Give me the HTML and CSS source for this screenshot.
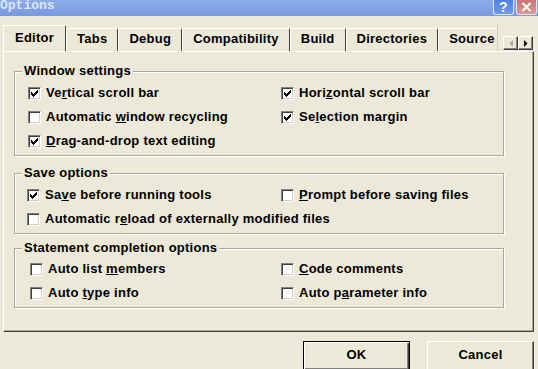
FILE: index.html
```html
<!DOCTYPE html>
<html lang="en">
<head>
  <meta charset="UTF-8" />
  <title>Options</title>
  <link rel="stylesheet" href="styles.css">
</head>
<body>
  <div class="titlebar">
    <span class="title">Options</span>
    <div class="caption-btns">
      <span class="cap-btn help">?</span>
      <span class="cap-btn close">
        <svg width="11" height="10" viewBox="0 0 11 10"><path d="M1.5 1l8 8M9.5 1l-8 8" stroke="#fff" stroke-width="2"/></svg>
      </span>
    </div>
  </div>

  <div class="tabrow">
    <div class="tabstrip">
      <div class="tab active">Editor</div>
      <div class="tab">Tabs</div>
      <div class="tab">Debug</div>
      <div class="tab">Compatibility</div>
      <div class="tab">Build</div>
      <div class="tab">Directories</div>
      <div class="tab">Source</div>
    </div>
    <div class="spin">
      <span class="spin-btn"><svg width="4" height="7" viewBox="0 0 4 7"><path d="M4 0v7L0.5 3.5z" fill="#aca899"/></svg></span>
      <span class="spin-btn"><svg width="4" height="7" viewBox="0 0 4 7"><path d="M0 0v7l3.5-3.5z" fill="#000"/></svg></span>
    </div>
  </div>

  <div class="panel">
    <div class="group">
      <div class="group-title">Window settings</div>
      <div class="opts">
        <div class="opt"><span class="cb"><svg width="11" height="11" viewBox="0 0 11 11"><path d="M2 4h1v3H2zM3 5h1v3H3zM4 6h1v3H4zM5 5h1v3H5zM6 4h1v3H6zM7 3h1v3H7zM8 2h1v3H8z"/></svg></span><span>Ve<u>r</u>tical scroll bar</span></div>
        <div class="opt"><span class="cb"><svg width="11" height="11" viewBox="0 0 11 11"><path d="M2 4h1v3H2zM3 5h1v3H3zM4 6h1v3H4zM5 5h1v3H5zM6 4h1v3H6zM7 3h1v3H7zM8 2h1v3H8z"/></svg></span><span>Hori<u>z</u>ontal scroll bar</span></div>
        <div class="opt"><span class="cb"></span><span>Automatic <u>w</u>indow recycling</span></div>
        <div class="opt"><span class="cb"><svg width="11" height="11" viewBox="0 0 11 11"><path d="M2 4h1v3H2zM3 5h1v3H3zM4 6h1v3H4zM5 5h1v3H5zM6 4h1v3H6zM7 3h1v3H7zM8 2h1v3H8z"/></svg></span><span>Se<u>l</u>ection margin</span></div>
        <div class="opt"><span class="cb"><svg width="11" height="11" viewBox="0 0 11 11"><path d="M2 4h1v3H2zM3 5h1v3H3zM4 6h1v3H4zM5 5h1v3H5zM6 4h1v3H6zM7 3h1v3H7zM8 2h1v3H8z"/></svg></span><span><u>D</u>rag-and-drop text editing</span></div>
      </div>
    </div>

    <div class="group group-save">
      <div class="group-title">Save options</div>
      <div class="opts opts-narrow">
        <div class="opt"><span class="cb"><svg width="11" height="11" viewBox="0 0 11 11"><path d="M2 4h1v3H2zM3 5h1v3H3zM4 6h1v3H4zM5 5h1v3H5zM6 4h1v3H6zM7 3h1v3H7zM8 2h1v3H8z"/></svg></span><span>Sa<u>v</u>e before running tools</span></div>
        <div class="opt"><span class="cb"></span><span><u>P</u>rompt before saving files</span></div>
        <div class="opt wide"><span class="cb"></span><span>Automatic r<u>e</u>load of externally modified files</span></div>
      </div>
    </div>

    <div class="group group-stmt">
      <div class="group-title">Statement completion options</div>
      <div class="opts opts-wide">
        <div class="opt"><span class="cb"></span><span>Auto list <u>m</u>embers</span></div>
        <div class="opt"><span class="cb"></span><span><u>C</u>ode comments</span></div>
        <div class="opt"><span class="cb"></span><span>Auto <u>t</u>ype info</span></div>
        <div class="opt"><span class="cb"></span><span>Auto p<u>a</u>rameter info</span></div>
      </div>
    </div>
  </div>

  <div class="buttons">
    <button class="btn default">OK</button>
    <button class="btn">Cancel</button>
  </div>
</body>
</html>
```

FILE: styles.css
```css
html, body {
  margin: 0;
  padding: 0;
  width: 538px;
  height: 369px;
  overflow: hidden;
  background: #ece9d8;
  font-family: 'Liberation Sans', Arial, sans-serif;
  font-size: 13px;
  font-weight: bold;
  letter-spacing: 0.25px;
  color: #000;
}
* { box-sizing: border-box; }

/* title bar, top is cut off in the shot */
.titlebar {
  height: 16px;
  display: flex;
  justify-content: space-between;
  background: linear-gradient(to bottom, #8eabea, #7898e0);
}

.title {
  font-family: 'Liberation Mono', 'Courier New', monospace;
  font-size: 13px;
  line-height: 13px;
  letter-spacing: 0;
  margin-top: -1px;
  color: #dde6f8;
}

.caption-btns {
  display: flex;
  gap: 2px;
  margin-right: 1px;
}

.cap-btn {
  width: 21px;
  height: 15px;
  display: flex;
  align-items: center;
  justify-content: center;
  border: 1px solid #dfe6f7;
  border-top: none;
  border-radius: 0 0 3px 3px;
  color: #fff;
  font-size: 14px;
  line-height: 14px;
}

.help { background: linear-gradient(to bottom, #4f82e6, #6d9aec); }
.close { background: linear-gradient(to bottom, #c97470, #dc9a94); }

/* tabs */
.tabrow {
  display: flex;
  align-items: flex-end;
  height: 35px;
}

.tabstrip {
  display: flex;
  align-items: flex-end;
  width: 495px;
  margin-left: 3px;
  height: 27px;
  overflow: hidden;
  border-right: 1px solid #d0ccbc;
}

.tab {
  flex-shrink: 0;
  height: 23px;
  padding: 1px 10px 0;
  line-height: 17px;
  border-top: 1px solid #fff;
  border-left: 1px solid #fff;
  border-right: 1px solid #404040;
  border-radius: 2px 2px 0 0;
  white-space: nowrap;
}

.tab.active {
  position: relative;
  height: 27px;
  margin-bottom: -1px;
  padding: 3px 11px 0 11px;
  background: #ece9d8;
}

.spin {
  display: flex;
  margin: 0 0 1px 5px;
}

.spin-btn {
  width: 15px;
  height: 14px;
  display: flex;
  align-items: center;
  justify-content: center;
  border: 1px solid;
  border-color: #fff #404040 #404040 #fff;
  box-shadow: inset -1px -1px #808080;
}

/* page */
.panel {
  position: relative;
  margin-left: 3px;
  width: 531px;
  height: 281px;
  padding-top: 19px;
  border: 1px solid;
  border-color: #fff #404040 #404040 #fff;
  box-shadow: inset -1px -1px #aca899;
}

.group {
  margin-left: 10px;
  width: 490px;
  padding-bottom: 2px;
  border: 1px solid #aca899;
  box-shadow: inset 1px 1px #fff, 1px 1px #fff;
}

.group-save { margin-top: 17px; }
.group-stmt { margin-top: 14px; }

.group-title {
  width: fit-content;
  margin: -8px 0 3px 7px;
  padding: 0 2px;
  line-height: 14px;
  background: #ece9d8;
}

.group-stmt .group-title { margin-bottom: 2px; }

.opts {
  display: grid;
  grid-template-columns: 253px 1fr;
  grid-auto-rows: 24px;
  padding-left: 13px;
}

.opts-narrow {
  grid-template-columns: 254px 1fr;
  padding-left: 12px;
}

.opts-wide {
  grid-template-columns: 251px 1fr;
  padding-left: 15px;
}

.opt {
  display: flex;
  align-items: center;
  line-height: 16px;
  white-space: nowrap;
}

.opt.wide { grid-column: span 2; }

.cb {
  flex-shrink: 0;
  width: 13px;
  height: 13px;
  margin-right: 5px;
  background: #fff;
  border: 1px solid;
  border-color: #808080 #fff #fff #808080;
  box-shadow: inset 1px 1px #404040, inset -1px -1px #d4d0c8;
}

.cb svg { display: block; }

/* dialog buttons */
.buttons {
  display: flex;
  justify-content: flex-end;
  gap: 17px;
  margin: 9px 4px 0 0;
}

.btn {
  width: 107px;
  height: 30px;
  padding: 5px 0 0;
  font: inherit;
  letter-spacing: inherit;
  line-height: 16px;
  background: #ece9d8;
  color: #000;
  border: 1px solid;
  border-color: #fff #404040 #404040 #fff;
  box-shadow: inset -1px -1px #808080;
  display: flex;
  justify-content: center;
  align-items: flex-start;
}

.btn.default {
  border-color: #000;
  box-shadow: inset 1px 1px #fff, inset -1px -1px #404040, inset -2px -2px #808080;
}
```
